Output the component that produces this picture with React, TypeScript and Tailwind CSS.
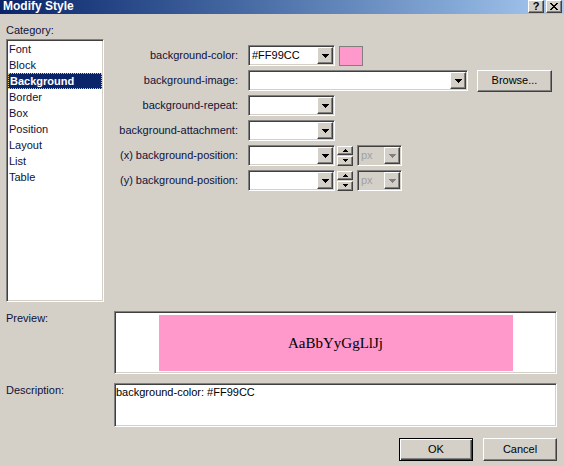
import React from "react";

const sunken =
  "border border-t-[#808080] border-l-[#808080] border-b-white border-r-white shadow-[inset_1px_1px_0_#404040,inset_-1px_-1px_0_#d4d0c8] p-[1px]";
const raised =
  "bg-[#d4d0c8] border border-t-white border-l-white border-b-[#404040] border-r-[#404040] shadow-[inset_-1px_-1px_0_#808080]";

function DownArrow({ color = "#000" }: { color?: string }) {
  return (
    <svg width="7" height="4" viewBox="0 0 7 4" shapeRendering="crispEdges">
      <rect x="0" y="0" width="7" height="1" fill={color} />
      <rect x="1" y="1" width="5" height="1" fill={color} />
      <rect x="2" y="2" width="3" height="1" fill={color} />
      <rect x="3" y="3" width="1" height="1" fill={color} />
    </svg>
  );
}

function TinyArrow({ up }: { up?: boolean }) {
  return (
    <svg width="5" height="3" viewBox="0 0 5 3" shapeRendering="crispEdges">
      {up ? (
        <>
          <rect x="2" y="0" width="1" height="1" fill="#000" />
          <rect x="1" y="1" width="3" height="1" fill="#000" />
          <rect x="0" y="2" width="5" height="1" fill="#000" />
        </>
      ) : (
        <>
          <rect x="0" y="0" width="5" height="1" fill="#000" />
          <rect x="1" y="1" width="3" height="1" fill="#000" />
          <rect x="2" y="2" width="1" height="1" fill="#000" />
        </>
      )}
    </svg>
  );
}

function Combo({
  text,
  wide,
  disabled,
}: {
  text?: string;
  wide?: "sm" | "lg" | "px";
  disabled?: boolean;
}) {
  const w = wide === "lg" ? "w-[220px]" : wide === "px" ? "w-[45px]" : "w-[87px]";
  return (
    <div className={`${sunken} ${w} h-[21px] flex ${disabled ? "bg-[#d4d0c8]" : "bg-white"}`}>
      <div
        className={`flex-1 pl-[2px] leading-[17px] overflow-hidden whitespace-nowrap ${
          disabled ? "text-[#a0a0a0]" : "text-black"
        }`}
      >
        {text}
      </div>
      {wide !== "lg" || true ? (
        <div className={`${raised} w-[16px] h-[17px] flex items-center justify-center`}>
          <DownArrow color={disabled ? "#808080" : "#000"} />
        </div>
      ) : null}
    </div>
  );
}

function Spinner() {
  return (
    <div className="ml-[2px] w-[16px] h-[20px] flex flex-col gap-[1px]">
      <div className={`${raised} h-[9px] flex items-center justify-center`}>
        <TinyArrow up />
      </div>
      <div className={`${raised} h-[10px] flex items-center justify-center`}>
        <TinyArrow />
      </div>
    </div>
  );
}

function CloseGlyph() {
  const rows = ["XX....XX", ".XX..XX.", "..XXXX..", "...XX...", "..XXXX..", ".XX..XX.", "XX....XX"];
  const rects: React.ReactNode[] = [];
  rows.forEach((r, y) =>
    r.split("").forEach((c, x) => {
      if (c === "X") rects.push(<rect key={`${x}-${y}`} x={x} y={y} width="1" height="1" fill="#000" />);
    })
  );
  return (
    <svg width="8" height="7" viewBox="0 0 8 7" shapeRendering="crispEdges">
      {rects}
    </svg>
  );
}

const categories = ["Font", "Block", "Background", "Border", "Box", "Position", "Layout", "List", "Table"];

export default function App() {
  return (
    <div className="w-[564px] h-[466px] bg-[#d4d0c8] flex flex-col font-['Liberation_Sans',Arial,sans-serif] text-[11px] text-[#10103a] overflow-hidden">
      {/* Title bar */}
      <div className="h-[14px] flex items-start justify-between bg-linear-to-r from-[#0a246a] to-[#a6caf0]">
        <span className="pl-[3px] text-white font-bold text-[12px] leading-[13px]">Modify Style</span>
        <div className="flex gap-[2px] pr-[2px]">
          <div className={`${raised} w-[16px] h-[13px] flex items-center justify-center font-bold text-[11px] leading-[11px] text-black`}>
            ?
          </div>
          <div className={`${raised} w-[16px] h-[13px] flex items-center justify-center`}>
            <CloseGlyph />
          </div>
        </div>
      </div>

      <div className="flex-1 flex flex-col pl-[6px] pr-[7px]">
        {/* Top section */}
        <div className="flex pt-[10px]">
          <div className="w-[98px] flex flex-col">
            <div className="h-[13px] leading-[13px]">Category:</div>
            <div className={`${sunken} mt-[2px] h-[263px] bg-white`}>
              {categories.map((c) =>
                c === "Background" ? (
                  <div
                    key={c}
                    className="h-[16px] leading-[14px] bg-[#0a246a] text-white font-bold pl-[1px] border border-dotted border-[#e8c870]"
                  >
                    {c}
                  </div>
                ) : (
                  <div key={c} className="h-[16px] leading-[16px] pl-[1px]">
                    {c}
                  </div>
                )
              )}
            </div>
          </div>

          <div className="ml-[6px] mt-[21px] self-start grid grid-cols-[128px_auto] gap-x-[10px] gap-y-[4px] auto-rows-[21px] items-center">
            <div className="text-right">background-color:</div>
            <div className="flex items-center">
              <Combo text="#FF99CC" />
              <div className="ml-[4px] w-[24px] h-[20px] bg-[#ff99cc] border border-[#808080]" />
            </div>

            <div className="text-right">background-image:</div>
            <div className="flex items-center">
              <Combo wide="lg" />
              <div className={`${raised} ml-[9px] w-[75px] h-[22px] flex items-center justify-center text-black`}>
                Browse...
              </div>
            </div>

            <div className="text-right">background-repeat:</div>
            <div className="flex items-center">
              <Combo />
            </div>

            <div className="text-right">background-attachment:</div>
            <div className="flex items-center">
              <Combo />
            </div>

            <div className="text-right">(x) background-position:</div>
            <div className="flex items-center">
              <Combo />
              <Spinner />
              <div className="ml-[4px]">
                <Combo wide="px" text="px" disabled />
              </div>
            </div>

            <div className="text-right">(y) background-position:</div>
            <div className="flex items-center">
              <Combo />
              <Spinner />
              <div className="ml-[4px]">
                <Combo wide="px" text="px" disabled />
              </div>
            </div>
          </div>
        </div>

        {/* Preview */}
        <div className="flex mt-[9px]">
          <div className="w-[108px] pt-[1px] leading-[13px]">Preview:</div>
          <div className={`${sunken} w-[443px] h-[63px] bg-white`}>
            <div className="flex justify-center pt-[2px]">
              <div className="w-[354px] h-[56px] bg-[#ff99cc] flex items-center justify-center font-['Liberation_Serif','Times_New_Roman',serif] text-[15px] text-black">
                AaBbYyGgLlJj
              </div>
            </div>
          </div>
        </div>

        {/* Description */}
        <div className="flex mt-[9px]">
          <div className="w-[108px] pt-[1px] leading-[13px]">Description:</div>
          <div className={`${sunken} w-[443px] h-[44px] bg-white`}>
            <div className="pt-[1px] leading-[13px] text-black">background-color: #FF99CC</div>
          </div>
        </div>

        {/* Buttons */}
        <div className="flex justify-end gap-[10px] mt-[11px]">
          <div className="w-[74px] h-[23px] bg-[#d4d0c8] border border-black shadow-[inset_1px_1px_0_#ffffff,inset_-1px_-1px_0_#404040,inset_-2px_-2px_0_#808080] flex items-center justify-center text-black">
            OK
          </div>
          <div className={`${raised} w-[74px] h-[23px] flex items-center justify-center text-black`}>Cancel</div>
        </div>
      </div>
    </div>
  );
}
